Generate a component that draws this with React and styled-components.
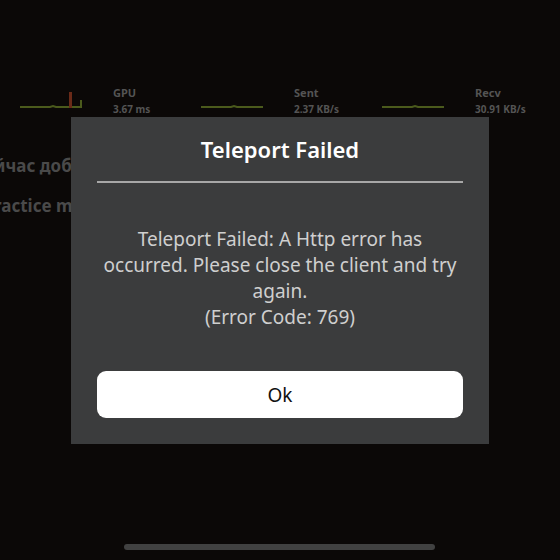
import React from "react";
import styled, { createGlobalStyle } from "styled-components";

const Global = createGlobalStyle`
  html, body {
    margin: 0;
    background: #0b0807;
  }
  body {
    font-family: "Noto Sans", "Open Sans", sans-serif;
  }
`;

const Screen = styled.div`
  position: relative;
  width: 560px;
  height: 560px;
  overflow: hidden;
  background: #0b0807;
`;

const Stats = styled.div`
  display: grid;
  grid-template-columns: repeat(3, 181px);
  padding: 87px 0 0 20px;
`;

const Stat = styled.div`
  display: flex;
  align-items: flex-end;
  gap: 31px;
`;

const Graph = styled.svg`
  width: 62px;
  height: 24px;
  display: block;
  margin-bottom: 2px;
`;

const StatText = styled.div`
  color: #545454;
  font-weight: 700;
  line-height: 1;
`;

const StatLabel = styled.div`
  font-size: 11px;
  margin-bottom: 6px;
`;

const StatValue = styled.div`
  font-size: 10px;
`;

const BgLines = styled.div`
  padding-top: 40px;
  margin-left: -6px;
  color: #4a4a4a;
  font-weight: 700;
  font-size: 17px;
  display: flex;
  flex-direction: column;
  gap: 17px;
`;

const Backdrop = styled.div`
  position: absolute;
  left: 71px;
  top: 117px;
  width: 418px;
  height: 327px;
  background: #3b3c3d;
  display: flex;
  flex-direction: column;
  align-items: center;
  padding: 0 26px;
  box-sizing: border-box;
`;

const Title = styled.div`
  margin-top: 18px;
  color: #fff;
  font-size: 22px;
  font-weight: 600;
  line-height: 28px;
`;

const Divider = styled.div`
  align-self: stretch;
  height: 2px;
  background: #a7a7a7;
  margin-top: 18px;
`;

const Message = styled.div`
  margin-top: 43px;
  color: #cfcfcf;
  font-size: 19px;
  line-height: 26px;
  text-align: center;
`;

const OkButton = styled.button`
  margin-top: auto;
  margin-bottom: 26px;
  align-self: stretch;
  height: 47px;
  border: none;
  border-radius: 9px;
  background: #fff;
  color: #111;
  font-family: inherit;
  font-size: 19px;
`;

const HomeBar = styled.div`
  position: absolute;
  left: 124px;
  bottom: 10px;
  width: 311px;
  height: 6px;
  border-radius: 3px;
  background: #414141;
`;

function MiniGraph({ spike }) {
  return (
    <Graph viewBox="0 0 62 24">
      <path d="M0 19 L30 19 L33 18 L36 19 L62 19" stroke="#4b5a1c" strokeWidth="2" fill="none" />
      {spike && (
        <>
          <rect x="49" y="4" width="3" height="16" fill="#6a2a18" />
          <rect x="60" y="12" width="2" height="8" fill="#4b5a1c" />
        </>
      )}
    </Graph>
  );
}

const stats = [
  { label: "GPU", value: "3.67 ms", spike: true },
  { label: "Sent", value: "2.37 KB/s" },
  { label: "Recv", value: "30.91 KB/s" },
];

export default function App() {
  return (
    <Screen>
      <Global />
      <Stats>
        {stats.map((s) => (
          <Stat key={s.label}>
            <MiniGraph spike={s.spike} />
            <StatText>
              <StatLabel>{s.label}</StatLabel>
              <StatValue>{s.value}</StatValue>
            </StatText>
          </Stat>
        ))}
      </Stats>
      <BgLines>
        <div>йчас добавлено</div>
        <div>ractice mode</div>
      </BgLines>

      <Backdrop>
        <Title>Teleport Failed</Title>
        <Divider />
        <Message>
          Teleport Failed: A Http error has
          <br />
          occurred. Please close the client and try
          <br />
          again.
          <br />
          (Error Code: 769)
        </Message>
        <OkButton>Ok</OkButton>
      </Backdrop>
      <HomeBar />
    </Screen>
  );
}
